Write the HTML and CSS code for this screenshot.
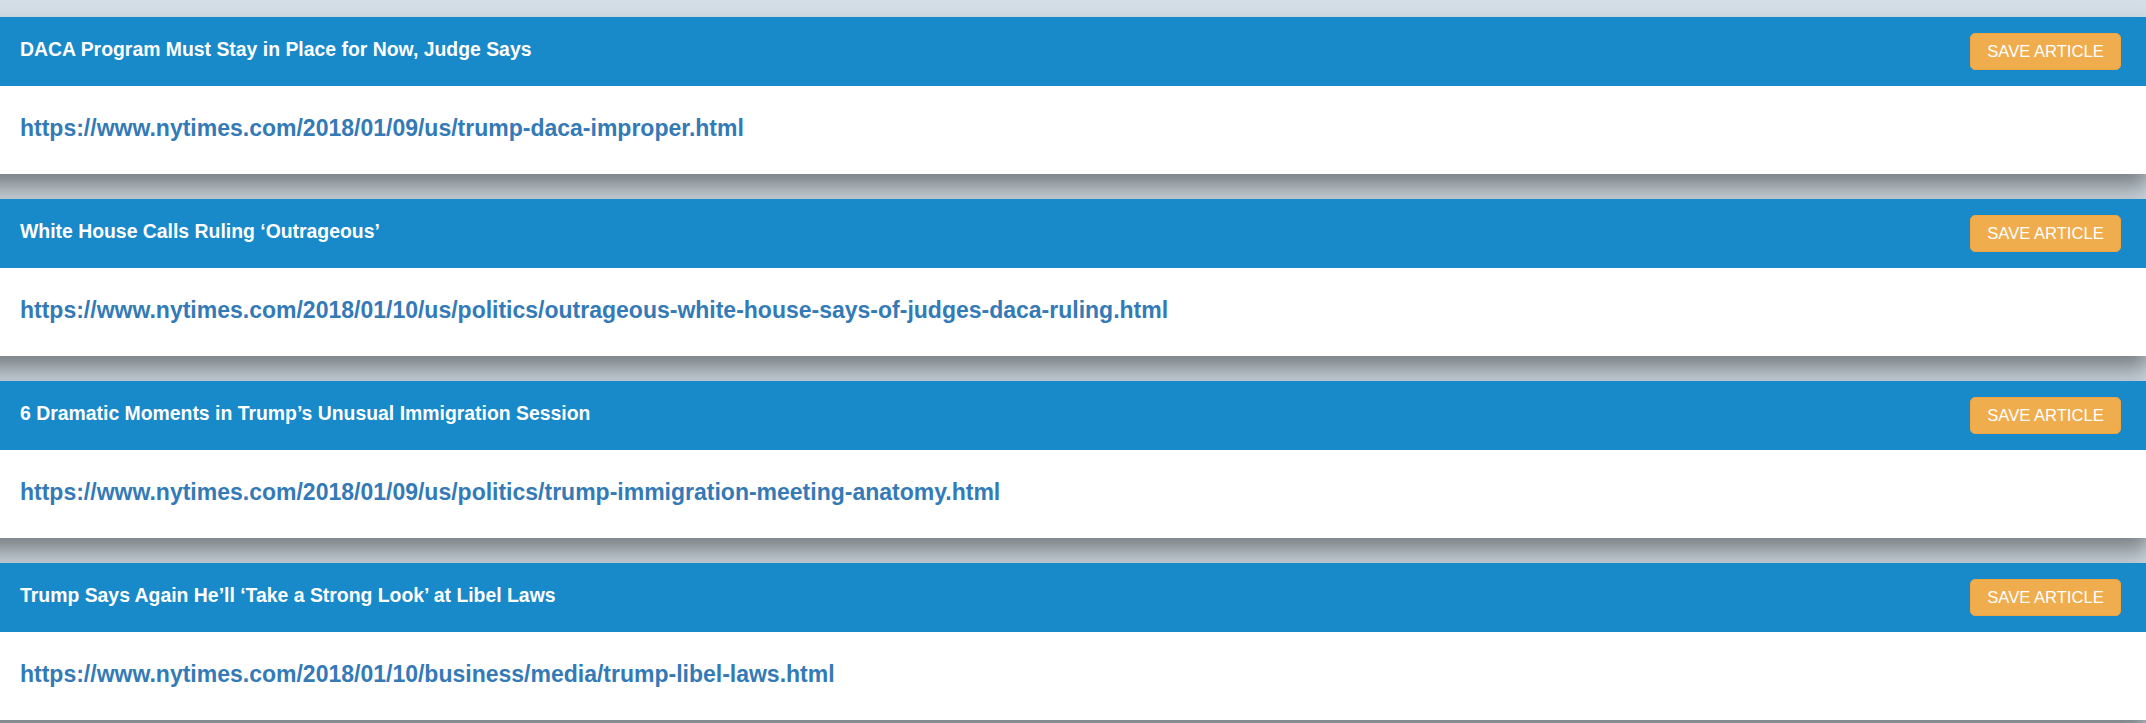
FILE: index.html
```html
<!DOCTYPE html>
<html>
<head>
<meta charset="utf-8">
<link rel="stylesheet" href="styles.css">
</head>
<body>
<main class="list">
  <article class="card">
    <div class="card-head">
      <h3 class="card-title">DACA Program Must Stay in Place for Now, Judge Says</h3>
      <button class="btn-save">SAVE ARTICLE</button>
    </div>
    <div class="card-body">
      <a class="card-link" href="#">https://www.nytimes.com/2018/01/09/us/trump-daca-improper.html</a>
    </div>
  </article>
  <article class="card">
    <div class="card-head">
      <h3 class="card-title">White House Calls Ruling ‘Outrageous’</h3>
      <button class="btn-save">SAVE ARTICLE</button>
    </div>
    <div class="card-body">
      <a class="card-link" href="#">https://www.nytimes.com/2018/01/10/us/politics/outrageous-white-house-says-of-judges-daca-ruling.html</a>
    </div>
  </article>
  <article class="card">
    <div class="card-head">
      <h3 class="card-title">6 Dramatic Moments in Trump’s Unusual Immigration Session</h3>
      <button class="btn-save">SAVE ARTICLE</button>
    </div>
    <div class="card-body">
      <a class="card-link" href="#">https://www.nytimes.com/2018/01/09/us/politics/trump-immigration-meeting-anatomy.html</a>
    </div>
  </article>
  <article class="card">
    <div class="card-head">
      <h3 class="card-title">Trump Says Again He’ll ‘Take a Strong Look’ at Libel Laws</h3>
      <button class="btn-save">SAVE ARTICLE</button>
    </div>
    <div class="card-body">
      <a class="card-link" href="#">https://www.nytimes.com/2018/01/10/business/media/trump-libel-laws.html</a>
    </div>
  </article>
</main>
</body>
</html>
```
FILE: styles.css
```css
html {
  overflow: hidden;
  background: #d3dee6;
}

body {
  margin: 0;
  padding: 0;
  font-family: "Liberation Sans", Arial, Helvetica, sans-serif;
}

.list {
  display: flex;
  flex-direction: column;
  gap: 25px;
  padding-top: 17px;
  padding-bottom: 25px;
}

.card {
  margin: 0 -4px 0 -40px;
  background: #ffffff;
  box-shadow: 0 14px 22px rgba(0, 0, 0, 0.43);
}

.card-head {
  height: 69px;
  box-sizing: border-box;
  display: flex;
  align-items: center;
  justify-content: space-between;
  padding: 0 29px 0 60px;
  background: #1889c9;
}

.card-title {
  margin: 0 0 4px 0;
  font-size: 19.4px;
  font-weight: bold;
  color: #ffffff;
}

.btn-save {
  width: 151px;
  height: 37px;
  box-sizing: border-box;
  border: 1px solid #eea43f;
  border-radius: 5px;
  background: #f0ad4e;
  color: #ffffff;
  font-family: "Liberation Sans", Arial, Helvetica, sans-serif;
  font-size: 16.6px;
  padding: 0;
  cursor: pointer;
}

.card-body {
  height: 88px;
  box-sizing: border-box;
  display: flex;
  align-items: center;
  padding: 0 0 4px 60px;
}

.card-link {
  font-size: 23px;
  font-weight: bold;
  color: #337ab7;
  text-decoration: none;
}
```
